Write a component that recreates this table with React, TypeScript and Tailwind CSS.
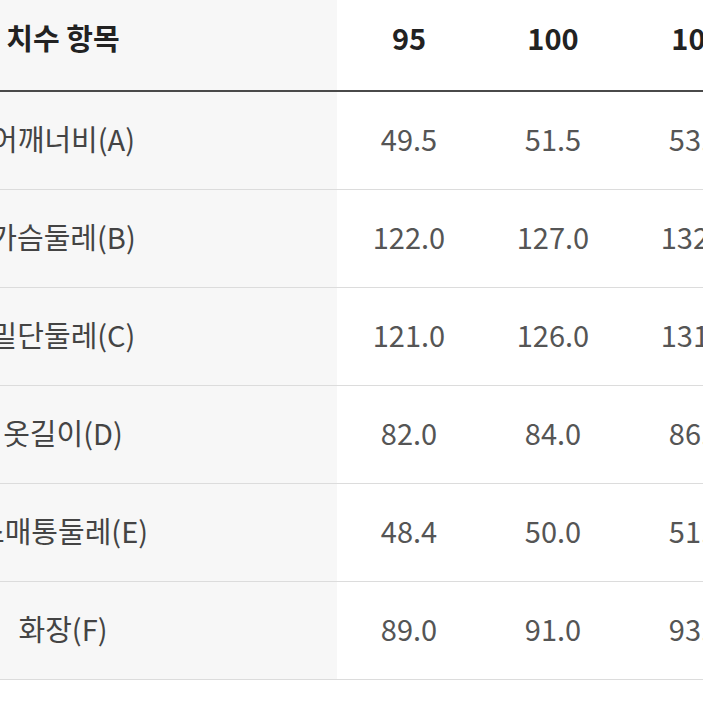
const sizes = ['95', '100', '105'];

const rows = [
  { label: '어깨너비(A)', values: ['49.5', '51.5', '53.5'] },
  { label: '가슴둘레(B)', values: ['122.0', '127.0', '132.0'] },
  { label: '밑단둘레(C)', values: ['121.0', '126.0', '131.0'] },
  { label: '옷길이(D)', values: ['82.0', '84.0', '86.0'] },
  { label: '소매통둘레(E)', values: ['48.4', '50.0', '51.6'] },
  { label: '화장(F)', values: ['89.0', '91.0', '93.0'] },
];

const font = { fontFamily: '"Noto Sans CJK KR", "Noto Sans", sans-serif' };

const App = () => {
  return (
    <div className="w-[703px] h-[703px] overflow-hidden bg-white" style={font}>
      <div className="w-[769px]">
        {/* header */}
        <div className="flex h-[92px] border-b-2 border-[#4a4a4a]">
          <div className="w-[337px] shrink-0 bg-[#f7f7f7] pb-[14px]">
            <div className="w-[126px] h-full flex items-center justify-center whitespace-nowrap text-[29px] font-bold text-[#222]">
              치수 항목
            </div>
          </div>
          {sizes.map((s) => (
            <div key={s} className="w-[144px] shrink-0 pb-[14px] flex items-center justify-center text-[29px] font-bold text-[#222]">
              {s}
            </div>
          ))}
        </div>
        {/* body */}
        {rows.map((r) => (
          <div key={r.label} className="flex h-[98px] border-b border-[#dcdcdc]">
            <div className="w-[337px] shrink-0 bg-[#f7f7f7] pb-1">
              <div className="w-[126px] h-full flex items-center justify-center whitespace-nowrap text-[29px] text-[#444]">
                {r.label}
              </div>
            </div>
            {r.values.map((v, i) => (
              <div key={i} className="w-[144px] shrink-0 pb-1 flex items-center justify-center text-[29px] text-[#555]">
                {v}
              </div>
            ))}
          </div>
        ))}
      </div>
    </div>
  );
};

export default App;
